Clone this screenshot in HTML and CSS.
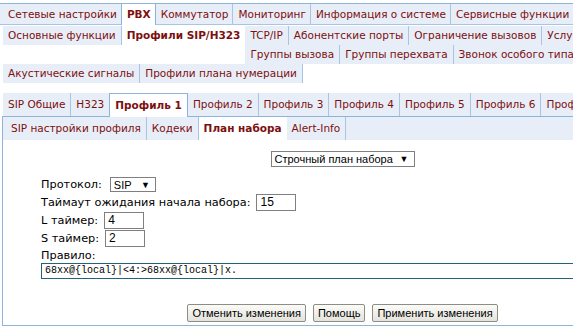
FILE: index.html
```html
<!DOCTYPE html>
<html lang="ru">
<head>
    <meta charset="UTF-8">
    <title>PBX - Профили SIP/H323</title>
    <link rel="stylesheet" href="styles.css">
</head>
<body>
    <div class="page">
        <div class="menu">
            <a class="menu-item">Сетевые настройки</a>
            <a class="menu-item active">PBX</a>
            <a class="menu-item">Коммутатор</a>
            <a class="menu-item">Мониторинг</a>
            <a class="menu-item">Информация о системе</a>
            <a class="menu-item">Сервисные функции</a>
            <a class="menu-item">Помощь</a>
        </div>

        <div class="subnav">
            <div class="subnav-top">
                <a class="sub-item first">Основные функции</a>
                <a class="sub-item active">Профили SIP/H323</a>
                <div class="subnav-wrap">
                    <div class="subnav-line">
                        <a class="sub-item">TCP/IP</a>
                        <a class="sub-item">Абонентские порты</a>
                        <a class="sub-item">Ограничение вызовов</a>
                        <a class="sub-item">Услуги</a>
                    </div>
                    <div class="subnav-line">
                        <a class="sub-item">Группы вызова</a>
                        <a class="sub-item">Группы перехвата</a>
                        <a class="sub-item">Звонок особого типа</a>
                    </div>
                </div>
            </div>
            <div class="subnav-line">
                <a class="sub-item">Акустические сигналы</a>
                <a class="sub-item">Профили плана нумерации</a>
            </div>
        </div>

        <div class="profiles">
            <a class="tab">SIP Общие</a>
            <a class="tab">H323</a>
            <a class="tab active">Профиль 1</a>
            <a class="tab">Профиль 2</a>
            <a class="tab">Профиль 3</a>
            <a class="tab">Профиль 4</a>
            <a class="tab">Профиль 5</a>
            <a class="tab">Профиль 6</a>
            <a class="tab">Профиль 7</a>
        </div>

        <div class="panel">
            <div class="panel-tabs">
                <a class="ptab">SIP настройки профиля</a>
                <a class="ptab">Кодеки</a>
                <a class="ptab active">План набора</a>
                <a class="ptab">Alert-Info</a>
            </div>

            <div class="panel-body">
                <div class="plan-type">
                    <span class="dropdown wide">Строчный план набора <span class="arrow">▼</span></span>
                </div>

                <div class="form">
                    <div class="form-row proto">
                        <span class="label">Протокол:</span>
                        <span class="dropdown small">SIP <span class="arrow">▼</span></span>
                    </div>
                    <div class="form-row">
                        <span class="label">Таймаут ожидания начала набора:</span>
                        <span class="field">15</span>
                    </div>
                    <div class="form-row">
                        <span class="label">L таймер:</span>
                        <span class="field">4</span>
                    </div>
                    <div class="form-row">
                        <span class="label">S таймер:</span>
                        <span class="field">2</span>
                    </div>
                    <div class="rule-label">Правило:</div>
                    <div class="rule-field">68xx@{local}|&lt;4:&gt;68xx@{local}|x.</div>
                </div>

                <div class="actions">
                    <button class="btn">Отменить изменения</button>
                    <button class="btn">Помощь</button>
                    <button class="btn">Применить изменения</button>
                </div>
            </div>
        </div>
    </div>
</body>
</html>
```

FILE: styles.css
```css
html, body {
    overflow: hidden;
}
body {
    margin: 0;
    background-color: #fff;
    font-family: "DejaVu Sans", Verdana, sans-serif;
    font-size: 10.5px;
    color: #000;
}
a {
    color: #7d0f0f;
    text-decoration: none;
    white-space: nowrap;
}
.page {
    width: 683px;
    padding-top: 3px;
}

/* top menu */
.menu {
    display: flex;
    height: 20px;
    padding-left: 3px;
    background-color: #e8eef8;
    border-top: 1px solid #8fb4da;
    border-bottom: 1px solid #a9c5e3;
}
.menu-item {
    padding: 0 4px 0 5px;
    line-height: 20px;
    border-right: 1px solid #a9c5e3;
}
.menu-item.active {
    background-color: #fff;
    border-left: 1px solid #8fb4da;
    border-right: 1px solid #8fb4da;
    margin-left: -1px;
    height: 21px;
    font-weight: bold;
}

/* second level menu */
.subnav {
    padding-left: 3px;
    padding-top: 1px;
}
.subnav-top {
    display: flex;
    align-items: flex-start;
}
.subnav-line {
    display: flex;
}
.sub-item {
    padding: 0 5px;
    line-height: 19px;
    background-color: #e8eef8;
    border-right: 1px solid #a9c5e3;
}
.sub-item.active {
    background-color: #fff;
    border-right: none;
    height: 38px;
    font-weight: bold;
}

/* profile tabs */
.profiles {
    display: flex;
    margin-top: 10px;
    padding-left: 3px;
}
.tab {
    padding: 0 5px;
    line-height: 22px;
    background-color: #e8eef8;
    border-right: 1px solid #a9c5e3;
}
.tab.active {
    background-color: #fff;
    border: 1px solid #8fb4da;
    border-bottom: none;
    margin: 0 0 -1px -1px;
    line-height: 23px;
    font-weight: bold;
}

.panel {
    margin-left: 2px;
    border: 1px solid #8fb4da;
    height: 208px;
}
.panel-tabs {
    display: flex;
    padding-left: 3px;
    background-color: #e8eef8;
}
.ptab {
    padding: 0 5px;
    line-height: 23px;
    border-right: 1px solid #a9c5e3;
}
.ptab.active {
    background-color: #fff;
    border-right: none;
    font-weight: bold;
}

/* form */
.panel-body {
    padding-top: 11px;
    font-size: 11.3px;
}
.plan-type {
    display: flex;
    justify-content: center;
    margin-bottom: 9px;
}
.dropdown {
    display: inline-flex;
    align-items: center;
    justify-content: space-between;
    height: 14px;
    border: 1px solid #7f7f7f;
    padding: 0 5px 0 3px;
    font-family: "Liberation Sans", Arial, sans-serif;
    font-size: 11px;
    white-space: nowrap;
    background-color: #fff;
}
.dropdown.wide {
    width: 134px;
}
.dropdown.small {
    width: 36px;
    height: 13px;
}
.arrow {
    font-size: 9px;
}
.form {
    padding-left: 38px;
}
.form-row {
    display: flex;
    align-items: center;
    height: 18px;
}
.form-row.proto {
    height: 17px;
}
.label {
    margin-right: 6px;
}
.proto .label {
    margin-right: 8px;
}
.field {
    width: 35px;
    height: 15px;
    border: 1px solid #7f7f7f;
    padding-left: 3px;
    font-family: "Liberation Sans", Arial, sans-serif;
    font-size: 12px;
    line-height: 15px;
}
.rule-label {
    margin-top: 2px;
    line-height: 14px;
}
.rule-field {
    width: 620px;
    height: 14px;
    border: 1px solid #25607c;
    padding-left: 3px;
    font-family: "Liberation Mono", "Courier New", monospace;
    font-size: 10px;
    line-height: 14px;
}
.actions {
    display: flex;
    justify-content: center;
    gap: 7px;
    margin-top: 25px;
}
.btn {
    height: 18px;
    padding: 0 4px;
    border: 1px solid #8d8d86;
    border-radius: 2px;
    background: linear-gradient(#fbfbf8, #e4e3dc);
    font-family: "Liberation Sans", Arial, sans-serif;
    font-size: 11px;
    color: #000;
}
```
